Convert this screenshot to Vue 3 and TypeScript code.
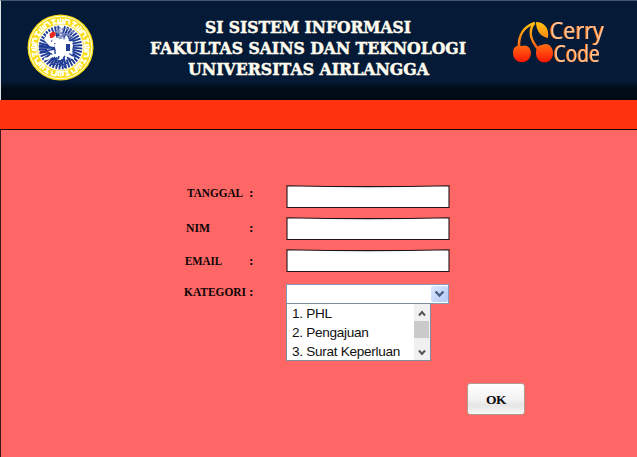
<script setup lang="ts">
import { ref } from 'vue'

interface Field { label: string; id: string; width: number; indent: number; drop: number }

const fields: Field[] = [
  { label: 'TANGGAL', id: 'tanggal', width: 56, indent: 3, drop: 0 },
  { label: 'NIM', id: 'nim', width: 24, indent: 2, drop: 3 },
  { label: 'EMAIL', id: 'email', width: 37, indent: 1, drop: 4 },
]
const options: string[] = ['1. PHL', '2. Pengajuan', '3. Surat Keperluan']
const selected = ref('')

function polar(r: number, deg: number): string {
  const a = (deg * Math.PI) / 180
  return `${(33.5 + r * Math.cos(a)).toFixed(2)} ${(33.5 + r * Math.sin(a)).toFixed(2)}`
}
const feathers = Array.from({ length: 20 }, (_, i) => i * 9 - 81)
  .flatMap((d) => [d, 180 - d])
  .map((d) => `M${polar(10.5 + (Math.abs(d) % 4), d)}L${polar(21.8, d + 3)}`)
  .join('')
const glyphs = Array.from({ length: 24 }, (_, i) => i * 15)
</script>

<template>
  <div class="page">
    <header class="header">
      <svg class="seal" width="67" height="67" viewBox="0 0 67 67">
        <circle cx="33.5" cy="33.5" r="33" fill="#f7dc16" />
        <circle cx="33.5" cy="33.5" r="31.2" fill="none" stroke="#fffce8" stroke-width="1" />
        <g fill="none" stroke="#fffef0" stroke-width="1.8">
          <path
            v-for="(g, i) in glyphs"
            :key="g"
            :transform="`rotate(${g} 33.5 33.5)`"
            :d="i % 3 === 0 ? 'M31 5V9H36V5M33.5 4V10' : i % 3 === 1 ? 'M31 10V5H35L36 9' : 'M31 5H36M32 9H36M33.5 5V9'"
          />
        </g>
        <circle cx="33.5" cy="33.5" r="22.8" fill="#fff" stroke="#fff8c8" stroke-width="1" />
        <path :d="feathers" stroke="#203c96" stroke-width="1.9" fill="none" />
        <g fill="none" stroke="#203c96" stroke-width="1.4">
          <path d="M12 31L28 34M12 34H28M13 38L28 35M28 29V40M19 45l4-3M22 49l5-5M44 47l-4-4M49 43l-5-2" />
          <path d="M27 43l3 3-3 3 3 4M32 42l-1 4 4 3-3 4M38 42l-3 4 4 3-2 5M25 51l4-3 5 4 6-3" stroke-dasharray="3 1" />
        </g>
        <g fill="none" stroke="#8591c2" stroke-width="1.7" stroke-dasharray="2 1">
          <path d="M29 13l8 2-8 3 9 2-7 3 8 2M39 14l8 4-7 2 7 4M31 16l6 5-5 4" />
        </g>
        <path d="M27 31l4-4 5 1 7-1 3 4-1 7-5 2-10-1z" fill="#fff" />
        <path d="M39 30h4v7h-4z" fill="#203c96" />
        <path d="M19 21l5-4 4 2-1 5-4 4-4-2z" fill="#fff" />
        <path d="M22.500 20l3-2.500 3 1v3l-3 2.500h-2.500z" fill="#ed2822" />
        <path d="M18 24q2 5 7 7M17 45q5 0 8-4M40 40q4 4 7 4" fill="none" stroke="#fff" stroke-width="2.5" />
      </svg>
      <svg class="title" width="330" height="66" viewBox="0 0 330 66">
        <text x="61" y="18" textLength="206" lengthAdjust="spacingAndGlyphs">SI SISTEM INFORMASI</text>
        <text x="6" y="39" textLength="316" lengthAdjust="spacingAndGlyphs">FAKULTAS SAINS DAN TEKNOLOGI</text>
        <text x="44" y="60" textLength="241" lengthAdjust="spacingAndGlyphs">UNIVERSITAS AIRLANGGA</text>
      </svg>
      <svg class="brand" width="100" height="56" viewBox="0 -4 100 56">
        <defs>
          <linearGradient id="cherry" gradientUnits="userSpaceOnUse" x1="0" y1="2" x2="0" y2="42">
            <stop offset="0" stop-color="#ffc20a" />
            <stop offset=".5" stop-color="#ff7a14" />
            <stop offset="1" stop-color="#ff1606" />
          </linearGradient>
        </defs>
        <g fill="none" stroke="url(#cherry)" stroke-width="2.6">
          <path d="M23 3C13 6 6 14 7 28" />
          <path d="M22 3C15 13 20 22 27 30" />
        </g>
        <g fill="url(#cherry)">
          <path d="M24 2c8 0 13.500 6 12 16C30 17 24 12 24 2z" />
          <path d="M10 26c4-2 9 1 9 7 0 5-4 9.300-9 9.300s-9-4-9-9.300c0-6 4-9 9-7z" />
          <path d="M30 25c6-3 11 2 11 8 0 6-4 9.300-8.500 9.300S24 39 24 33c0-5 2-8 6-8z" />
        </g>
        <g class="brand-text">
          <text x="38" y="19" textLength="54" lengthAdjust="spacingAndGlyphs">Cerry</text>
          <text x="42" y="42" textLength="46" lengthAdjust="spacingAndGlyphs">Code</text>
        </g>
      </svg>
    </header>
    <div class="band"></div>
    <main class="body">
      <form class="form" @submit.prevent>
        <div v-for="f in fields" :key="f.id" class="row">
          <svg class="label" width="102" height="24">
            <text :x="f.indent" :y="12 + f.drop" :textLength="f.width" lengthAdjust="spacingAndGlyphs">{{ f.label }}</text>
            <text x="65" :y="12 + f.drop">:</text>
          </svg>
          <svg class="field" width="164" height="24" viewBox="0 0 164 24">
            <path d="M1 .8Q82 2.500 163 .8V22.500H1Z" fill="#fff" stroke="#231417" stroke-width="1.1" />
          </svg>
        </div>
        <div class="row category">
          <svg class="label" width="102" height="24">
            <text x="0" y="13" textLength="62" lengthAdjust="spacingAndGlyphs">KATEGORI</text>
            <text x="65" y="13">:</text>
          </svg>
          <div class="picker">
            <div class="select">
              <span>{{ selected }}</span>
              <i class="drop">
                <svg width="17" height="15"><path d="M4.500 5.500l4 4 4-4" fill="none" stroke="#4b6185" stroke-width="2.400" /></svg>
              </i>
            </div>
            <div class="list">
              <ul>
                <li v-for="o in options" :key="o" @click="selected = o">{{ o }}</li>
              </ul>
              <div class="scroll">
                <svg width="16" height="17"><path d="M5 11.500l3-3.500 3 3.500" fill="none" stroke="#555" stroke-width="2" /></svg>
                <i class="thumb"></i>
                <svg width="16" height="22"><path d="M5 12.500l3 3.500 3-3.500" fill="none" stroke="#555" stroke-width="2" /></svg>
              </div>
            </div>
          </div>
        </div>
        <button class="ok" type="submit">OK</button>
      </form>
    </main>
  </div>
</template>

<style>
body { margin: 0; overflow: hidden; }
</style>
<style scoped>
* { box-sizing: border-box; }
.page { width: 637px; height: 457px; display: flex; flex-direction: column; background: #ff6666; }
.header {
  height: 100px; flex: none; display: flex; align-items: flex-start;
  padding-left: 26px; border-left: 1px solid #dfe4e6; border-top: 1px solid #46566d;
  background: linear-gradient(#041a36 0 80px, #000b17 88px, #000b15 100%);
}
svg { display: block; flex: none; }
.seal { margin-top: 13px; }
.title { margin: 14px 0 0 50px; }
.title text { font: bold 16px "DejaVu Serif", serif; fill: #fffcef; stroke: #fffcef; stroke-width: .5; }
.brand { margin: 15px 0 0 38px; overflow: visible; }
.brand text { font: 23px "Open Sans", sans-serif; }
.brand-text { fill: #ffc397; filter: drop-shadow(-1px 0 0 #ff6a08); }
.band { height: 30px; flex: none; background: #ff330f; border-bottom: 1px solid #170604; }
.body { flex: 1; border-left: 1px solid #391719; padding: 55px 0 0 183px; }
.form { width: 341px; display: flex; flex-direction: column; gap: 8px; }
.row { display: flex; height: 24px; }
.label text { font: bold 13.5px "Liberation Serif", serif; fill: #090405; }
.category { height: 79px; padding-top: 3px; }
.category .label { margin-top: -1px; }
.picker { width: 163px; }
.select {
  height: 20px; border: 1px solid #7e9db9; background: #fff; display: flex;
  justify-content: space-between; padding: 1px 0 1px 1px;
}
.drop { width: 17px; height: 16px; border-radius: 2px; background: linear-gradient(135deg, #dce7fe, #b3caf4); }
.list {
  width: 145px; height: 58px; margin-top: -1px; border: 1px solid #7e8d9d;
  background: #fff; display: flex; justify-content: space-between;
}
ul { margin: 0; padding: 0 0 0 5px; list-style: none; }
li {
  font: 13.6px/20px "Liberation Sans", sans-serif; letter-spacing: -.3px;
  height: 19px; color: #111; white-space: nowrap;
}
.scroll { width: 16px; background: #f0f0f0; }
.thumb { display: block; width: 15px; height: 17px; background: #cacaca; }
.ok {
  align-self: flex-end; width: 58px; height: 32px; margin-top: 15px; padding: 2px 0 0;
  border: 1px solid #b29c90; border-radius: 3px; color: #090909;
  background: linear-gradient(#fff, #f3f3f3 50%, #e6e6e6 72%, #f9f9f9);
  font: bold 13.5px "Liberation Serif", serif; letter-spacing: -.6px;
}
</style>
